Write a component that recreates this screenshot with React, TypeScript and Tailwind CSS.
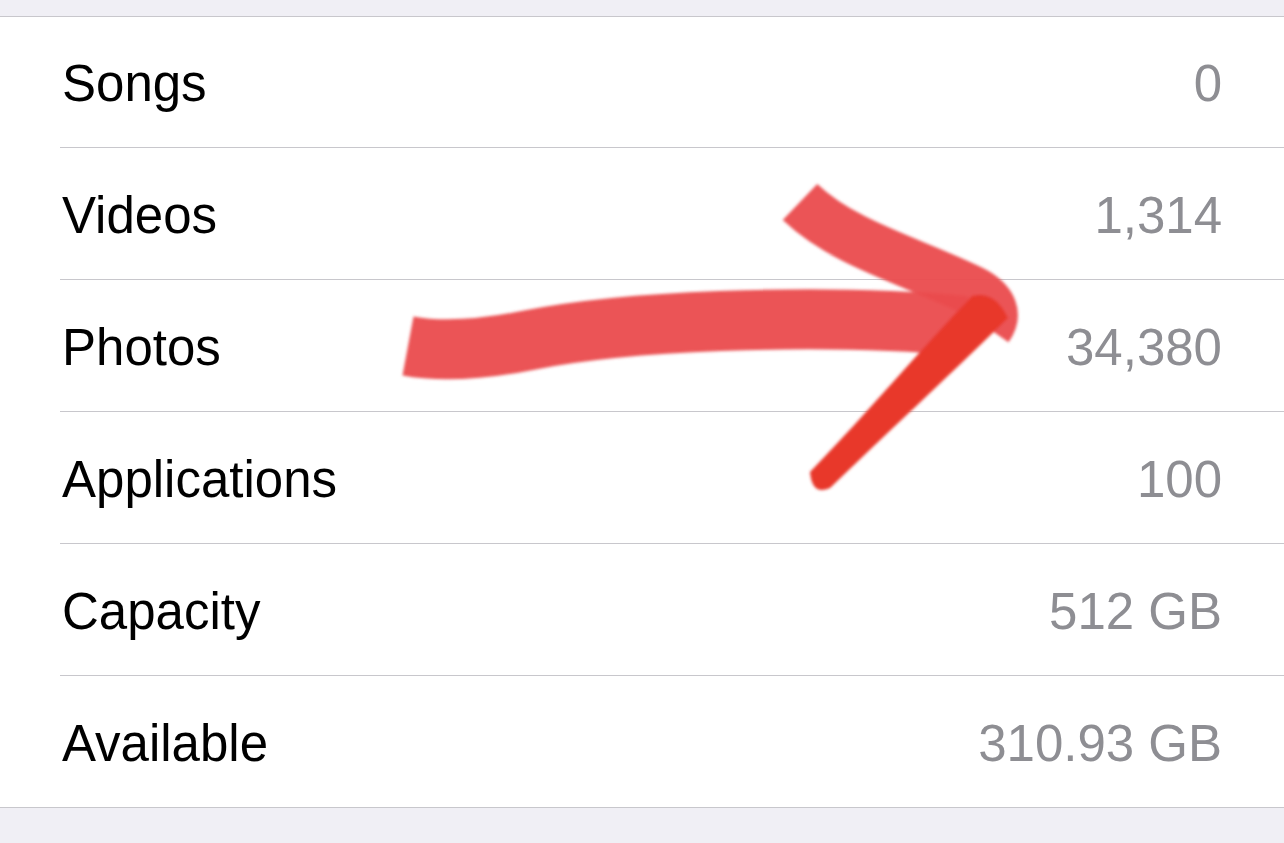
import React from "react";

const rows = [
  { label: "Songs", value: "0" },
  { label: "Videos", value: "1,314" },
  { label: "Photos", value: "34,380" },
  { label: "Applications", value: "100" },
  { label: "Capacity", value: "512 GB" },
  { label: "Available", value: "310.93 GB" },
];

function Arrow() {
  return (
    <svg
      className="absolute left-0 top-0 pointer-events-none"
      width="1284"
      height="843"
      viewBox="0 0 1284 843"
    >
      <defs>
        <filter id="soft" x="-10%" y="-10%" width="120%" height="120%">
          <feGaussianBlur stdDeviation="1.6" />
        </filter>
      </defs>
      <g filter="url(#soft)">
        {/* shaft */}
        <path
          d="M 408 346 C 440 352, 480 350, 530 340 S 640 324, 720 321 S 880 318, 965 326"
          fill="none"
          stroke="#ea4c4e"
          strokeWidth="60"
          strokeLinecap="butt"
          opacity="0.96"
        />
        {/* upper head stroke */}
        <path
          d="M 800 202 C 845 245, 915 262, 975 292 Q 1002 308, 988 328"
          fill="none"
          stroke="#ea4c4e"
          strokeWidth="50"
          strokeLinecap="butt"
          strokeLinejoin="round"
          opacity="0.96"
        />
        {/* lower head stroke, tapered */}
        <path
          d="M 972 296 Q 995 290, 1008 318 C 950 375, 890 430, 830 488 Q 812 496, 810 472 C 870 410, 920 350, 972 296 Z"
          fill="#e8382c"
        />
      </g>
    </svg>
  );
}

export default function App() {
  return (
    <div
      className="relative w-[1284px] h-[843px] overflow-hidden bg-[#f0eff5]"
      style={{ fontFamily: '"Liberation Sans", Arial, sans-serif' }}
    >
      <div className="h-4" />
      <div className="bg-white border-t border-b border-[#c8c7cc]">
        {rows.map((row, i) => (
          <div key={row.label} className="pl-[60px]">
            <div
              className={`flex items-center justify-between pl-[2px] pr-[62px] pt-[3px] ${
                i === 0 || i === rows.length - 1 ? "h-[131px]" : "h-[132px]"
              } ${i < rows.length - 1 ? "border-b border-[#c8c7cc]" : ""}`}
            >
              <span className="text-[51px] leading-none text-black">{row.label}</span>
              <span className="text-[51px] leading-none text-[#8e8e93]">{row.value}</span>
            </div>
          </div>
        ))}
      </div>
      <Arrow />
    </div>
  );
}
